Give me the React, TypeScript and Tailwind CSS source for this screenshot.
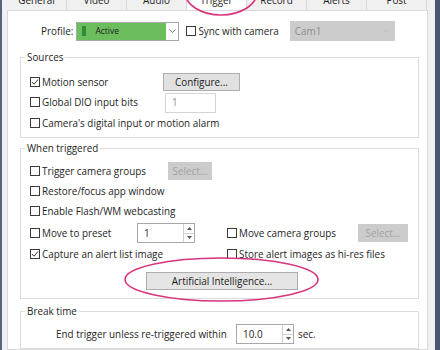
import type { ReactNode } from 'react';

const TABS = ['General', 'Video', 'Audio', 'Trigger', 'Record', 'Alerts', 'Post'];

function Check({ checked = false }: { checked?: boolean }) {
  return (
    <span className="flex h-[10px] w-[10px] shrink-0 items-center justify-center border border-[#3a3a3a] bg-white">
      {checked && (
        <svg width="8" height="8" viewBox="0 0 8 8">
          <polyline points="1,4 3,6.2 7,1.5" fill="none" stroke="#333" strokeWidth="1" />
        </svg>
      )}
    </span>
  );
}

function CheckRow({ label, checked, className = '' }: { label: string; checked?: boolean; className?: string }) {
  return (
    <span className={`flex items-center gap-[2px] ${className}`}>
      <Check checked={checked} />
      <span>{label}</span>
    </span>
  );
}

function Btn({ children, disabled, className = '' }: { children: ReactNode; disabled?: boolean; className?: string }) {
  return (
    <span
      className={`flex items-center justify-center border ${
        disabled ? 'border-[#cccccc] bg-[#cccccc] text-[#a3a3a3]' : 'border-[#adadad] bg-[#e1e1e1] text-[#1a1a1a]'
      } ${className}`}
    >
      {children}
    </span>
  );
}

function Spin({ value, className = '' }: { value: string; className?: string }) {
  return (
    <span className={`flex border border-[#a8a8a8] bg-white ${className}`}>
      <span className="flex flex-1 items-center pl-[6px]">{value}</span>
      <span className="flex w-[11px] flex-col border-l border-[#d0d0d0]">
        <span className="flex flex-1 items-center justify-center border-b border-[#d0d0d0]">
          <svg width="5" height="3" viewBox="0 0 5 3">
            <polygon points="0,3 5,3 2.5,0" fill="#555" />
          </svg>
        </span>
        <span className="flex flex-1 items-center justify-center">
          <svg width="5" height="3" viewBox="0 0 5 3">
            <polygon points="0,0 5,0 2.5,3" fill="#555" />
          </svg>
        </span>
      </span>
    </span>
  );
}

function Group({ title, children, className = '' }: { title: string; children: ReactNode; className?: string }) {
  return (
    <fieldset className={`border border-[#dcdcdc] ${className}`}>
      <legend className="ml-[4px] px-[2px] leading-[14px]">{title}</legend>
      {children}
    </fieldset>
  );
}

function Chevron({ color }: { color: string }) {
  return (
    <svg width="7" height="4" viewBox="0 0 7 4">
      <polyline points="0.5,0.5 3.5,3.5 6.5,0.5" fill="none" stroke={color} strokeWidth="1" />
    </svg>
  );
}

export default function App() {
  return (
    <div className="relative flex h-[350px] w-[440px] overflow-hidden bg-[#f0f0f0] font-['Open_Sans',sans-serif] text-[9.9px] text-[#1e1e1e]">
      <div className="w-[2px] bg-[#56647e]" />
      <div className="w-[5px]" />
      <div className="flex w-[421px] flex-col">
        {/* tab strip, tops cut off by the crop */}
        <div className="h-[10px] overflow-hidden">
          <div className="-mt-[9px] flex h-[19px]">
            {TABS.map((t) => (
              <span
                key={t}
                className={`flex w-[60px] items-center justify-center border-r border-[#d9d9d9] ${
                  t === 'Trigger' ? 'bg-white' : 'bg-[#f0f0f0]'
                }`}
              >
                {t}
              </span>
            ))}
          </div>
        </div>

        <div className="flex flex-1 flex-col border border-[#d9d9d9] bg-white pl-[12px] pr-[8px] pt-[10px]">
          {/* profile row */}
          <div className="flex h-[20px] items-center">
            <span className="ml-[21px]">Profile:</span>
            <span className="ml-[3px] flex h-[19px] w-[103px] items-center border border-[#a8a8a8]">
              <span className="flex h-full flex-1 items-center bg-[#6cbd5e]">
                <span className="ml-[5px] h-[10px] w-[4px] bg-[#2e8b3a]" />
                <span className="ml-[9px] text-[8.5px]">Active</span>
              </span>
              <span className="flex h-full w-[12px] items-center justify-center bg-white">
                <Chevron color="#777" />
              </span>
            </span>
            <CheckRow label="Sync with camera" className="ml-[7px]" />
            <span className="ml-[11px] flex h-[20px] w-[105px] items-center justify-between bg-[#cccccc] pl-[5px] pr-[5px] text-[#8c8c8c]">
              <span>Cam1</span>
              <Chevron color="#bdbdbd" />
            </span>
          </div>

          <Group title="Sources" className="mt-[9px] w-[399px]">
            <div className="flex flex-col pb-[4px] pl-[9px] pt-[8px]">
              <div className="flex h-[20px] items-center">
                <CheckRow label="Motion sensor" checked className="w-[133px]" />
                <Btn className="h-[18px] w-[77px]">Configure...</Btn>
              </div>
              <div className="flex h-[21px] items-center">
                <CheckRow label="Global DIO input bits" className="w-[135px]" />
                <span className="flex h-[20px] w-[51px] items-center border border-[#d4d4d4] pl-[6px] text-[#8c8c8c]">1</span>
              </div>
              <div className="flex h-[20px] items-center">
                <CheckRow label="Camera's digital input or motion alarm" />
              </div>
            </div>
          </Group>

          <Group title="When triggered" className="mt-[3px] w-[399px]">
            <div className="flex flex-col pb-[8px] pl-[9px] pt-[6px]">
              <div className="flex h-[20px] items-center">
                <CheckRow label="Trigger camera groups" className="w-[138px]" />
                <Btn disabled className="h-[18px] w-[44px]">Select...</Btn>
              </div>
              <div className="flex h-[20px] items-center">
                <CheckRow label="Restore/focus app window" />
              </div>
              <div className="flex h-[21px] items-center">
                <CheckRow label="Enable Flash/WM webcasting" />
              </div>
              <div className="flex h-[22px] items-center">
                <CheckRow label="Move to preset" className="w-[107px]" />
                <Spin value="1" className="h-[20px] w-[58px]" />
                <CheckRow label="Move camera groups" className="ml-[32px] w-[131px]" />
                <Btn disabled className="h-[18px] w-[50px]">Select...</Btn>
              </div>
              <div className="flex h-[21px] items-center">
                <CheckRow label="Capture an alert list image" checked className="w-[197px]" />
                <CheckRow label="Store alert images as hi-res files" />
              </div>
              <div className="mt-[7px] flex justify-center pr-[4px]">
                <Btn className="h-[18px] w-[152px] border-[#3b8ad6] bg-[#e5e5e5]">Artificial Intelligence...</Btn>
              </div>
            </div>
          </Group>

          <Group title="Break time" className="mt-[5px] w-[399px] flex-1">
            <div className="flex items-center pl-[35px] pt-[6px]">
              <span className="w-[180px]">End trigger unless re-triggered within</span>
              <Spin value="10.0" className="h-[20px] w-[58px]" />
              <span className="ml-[4px]">sec.</span>
            </div>
          </Group>
        </div>
      </div>
      <div className="w-[7px]" />
      <div className="w-[5px] bg-[#4a566e]" />

      {/* pink highlight ellipses drawn over the dialog */}
      <svg className="pointer-events-none absolute left-0 top-0" width="440" height="350" viewBox="0 0 440 350">
        <ellipse cx="221" cy="-8" rx="36" ry="23" fill="none" stroke="#d8347c" strokeWidth="1.6" />
        <ellipse cx="221.5" cy="279.5" rx="96.5" ry="21.5" fill="none" stroke="#d8347c" strokeWidth="1.6" />
      </svg>
    </div>
  );
}
